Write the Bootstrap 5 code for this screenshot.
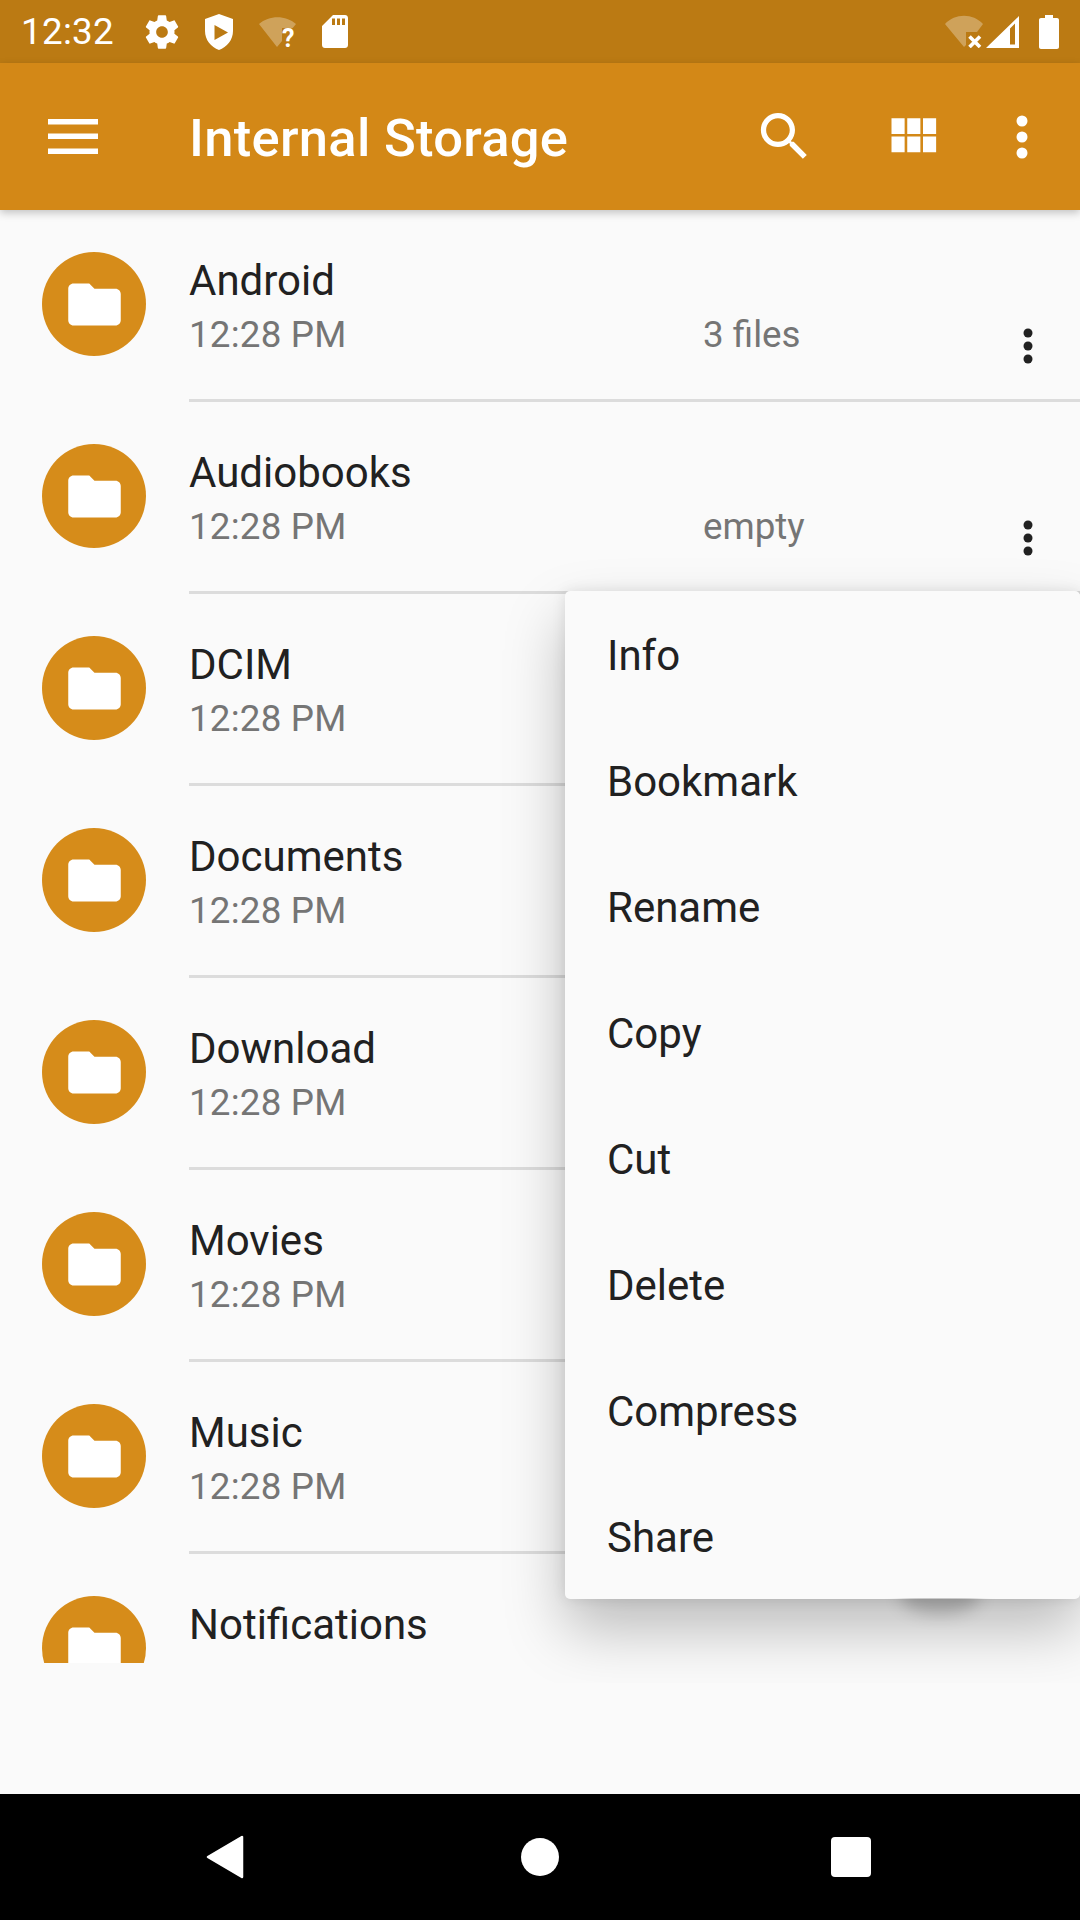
<!DOCTYPE html>
<html lang="en">
<head>
<meta charset="utf-8">
<title>Internal Storage</title>
<link rel="stylesheet" href="https://cdn.jsdelivr.net/npm/bootstrap@5.3.0/dist/css/bootstrap.min.css">
<style>
html, body { margin: 0; background: #fafafa; }
.phone { width: 1080px; height: 1920px; font-family: Roboto, "Liberation Sans", sans-serif; background: #fafafa; color: #212121; overflow: hidden; }
.statusbar { height: 63px; background: #bb7a13; color: #fff; font-size: 36.75px; line-height: 63px; flex: none; padding-right: 21px; }
.clock { margin-left: 21px; width: 96px; letter-spacing: .3px; }
.st-gear { margin-left: 24.5px; }
.st-shield { margin-left: 22.5px; }
.st-wifi { margin-left: 25px; }
.st-sd { margin-left: 25px; }
.st-signal { margin-left: 3px; }
.st-batt { margin-left: 20px; }
.q-mark { font-family: Roboto, "Liberation Sans", sans-serif; font-size: 25px; font-weight: 700; fill: #fff; }
.toolbar { height: 147px; background: #d38817; color: #fff; flex: none; position: relative; z-index: 2; box-shadow: 0 3px 8px rgba(0,0,0,.22); }
.tb-menu { margin-left: 48px; }
.tb-title { margin: 0 0 0 91px; font-size: 52.5px; font-weight: 500; line-height: 1; flex-grow: 1; padding-top: 4px; letter-spacing: .3px; }
.tb-search { margin-right: 65px; }
.tb-grid { margin-right: 72px; }
.tb-more { margin-right: 52px; }
.content { flex: 1 1 auto; position: relative; overflow: hidden; }
.files { height: 1453px; overflow: hidden; }
.file-row { height: 192px; background: transparent; border: 0; padding: 0; }
.folder-dot { width: 104px; height: 104px; margin: 42px 43px 0 42px; background: #d68c1a; border-radius: 50%; flex: none; }
.file-body { height: 192px; border-bottom: 3px solid #dcdcdc; padding-top: 46px; }
.file-row:last-child .file-body { border-bottom: 0; }
.file-name { font-size: 42px; line-height: 50px; color: #212121; }
.file-meta { font-size: 36.75px; line-height: 44px; color: #757575; margin-top: 7px; letter-spacing: .2px; }
.file-time { width: 514px; flex: none; }
.file-size { width: 316px; flex: none; letter-spacing: 0; }
.file-more { margin-top: 11px; flex: none; }
.popup { display: block; position: absolute; left: 565px; top: 381px; width: 515px; height: 1008px; padding: 0; margin: 0; border: 0; border-radius: 5px; background: #fafafa; z-index: 3; box-shadow: 0 30px 60px rgba(0,0,0,.25), 0 0 14px rgba(0,0,0,.1); clip-path: inset(-40px 0 -84px -70px); }
.popup-item { display: block; height: 126px; padding: 0 42px; font-size: 42px; line-height: 130px; color: #212121; }
.fab-shadow { position: absolute; left: 900px; top: 1368px; width: 80px; height: 36px; border-radius: 50%; background: rgba(0,0,0,.2); filter: blur(8px); z-index: 4; clip-path: inset(20px -30px -30px -30px); }
.navbar-sys { height: 126px; background: #000; flex: none; }
.nav-back { position: absolute; left: 205px; top: 40px; }
.nav-home { position: absolute; left: 521px; top: 44px; width: 38px; height: 38px; background: #fff; border-radius: 50%; }
.nav-recent { position: absolute; left: 831px; top: 43px; width: 40px; height: 40px; background: #fff; border-radius: 4px; }
svg { display: block; flex: none; }
</style>
</head>
<body>
<div class="phone d-flex flex-column">
  <div class="statusbar d-flex align-items-center">
    <span class="clock">12:32</span>
    <svg class="st-gear" width="40" height="40" viewBox="0 0 24 24" fill="#fff"><path d="M19.43 12.98c.04-.32.07-.64.07-.98s-.03-.66-.07-.98l2.11-1.65c.19-.15.24-.42.12-.64l-2-3.46c-.12-.22-.39-.3-.61-.22l-2.49 1c-.52-.4-1.08-.73-1.69-.98l-.38-2.65C14.46 2.18 14.25 2 14 2h-4c-.25 0-.46.18-.49.42l-.38 2.65c-.61.25-1.17.59-1.69.98l-2.49-1c-.23-.09-.49 0-.61.22l-2 3.46c-.13.22-.07.49.12.64l2.11 1.65c-.04.32-.07.65-.07.98s.03.66.07.98l-2.11 1.65c-.19.15-.24.42-.12.64l2 3.46c.12.22.39.3.61.22l2.49-1c.52.4 1.08.73 1.69.98l.38 2.65c.03.24.24.42.49.42h4c.25 0 .46-.18.49-.42l.38-2.65c.61-.25 1.17-.59 1.69-.98l2.49 1c.23.09.49 0 .61-.22l2-3.46c.12-.22.07-.49-.12-.64l-2.11-1.65zM12 15.5c-1.93 0-3.5-1.57-3.5-3.5s1.57-3.5 3.5-3.5 3.5 1.57 3.5 3.5-1.57 3.5-3.5 3.5z"/></svg>
    <svg class="st-shield" width="30" height="36" viewBox="0 0 30 36"><path fill="#fff" fill-rule="evenodd" d="M15 0 L29 5 V17 C29 26 23 33 15 36 C7 33 1 26 1 17 V5 Z M10.5 11 V26 L24 18.5 Z"/></svg>
    <svg class="st-wifi" width="38" height="44" viewBox="0 -6 38 44"><path fill="#fff" fill-opacity=".3" d="M0 8 C10 -1 27 -1 37 8 L33.7 12 H23 V25 L18 31 Z"/><text class="q-mark" x="23" y="31">?</text></svg>
    <svg class="st-sd" width="26" height="33" viewBox="0 0 26 33"><path fill="#fff" fill-rule="evenodd" d="M11 0 H23 C24.7 0 26 1.3 26 3 V30 C26 31.7 24.7 33 23 33 H3 C1.3 33 0 31.7 0 30 V11 Z M10 3.5 V10 H13 V3.5 Z M15 3.5 V10 H18 V3.5 Z M20 3.5 V10 H23 V3.5 Z"/></svg>
    <svg class="ms-auto" width="38" height="33" viewBox="0 0 38 33"><path fill="#fff" fill-opacity=".3" d="M0 9 C10 -2 28 -2 38 9 L32 17 H21 V30 L19 32 Z"/><path stroke="#fff" stroke-width="3.6" d="M24.5 21.5 L35 32 M35 21.5 L24.5 32"/></svg>
    <svg class="st-signal" width="33" height="32" viewBox="0 0 33 32"><path fill="#fff" fill-rule="evenodd" d="M33 0 V32 H0 Z M29 7.5 L24 12.5 V28.5 H29 Z"/></svg>
    <svg class="st-batt" width="20" height="34" viewBox="0 0 20 34"><path fill="#fff" d="M6 0 H14 V3 H18 C19.1 3 20 3.9 20 5 V32 C20 33.1 19.1 34 18 34 H2 C.9 34 0 33.1 0 32 V5 C0 3.9 .9 3 2 3 H6 Z"/></svg>
  </div>

  <header class="toolbar d-flex align-items-center">
    <svg class="tb-menu" width="50" height="35" viewBox="0 0 50 35" fill="#fff"><rect width="50" height="5.5" y="0"/><rect width="50" height="5.5" y="14.5"/><rect width="50" height="5.5" y="29.5"/></svg>
    <h1 class="tb-title">Internal Storage</h1>
    <svg class="tb-search" width="63" height="63" viewBox="0 0 24 24" fill="#fff"><path d="M15.5 14h-.79l-.28-.27C15.41 12.59 16 11.11 16 9.5 16 5.91 13.09 3 9.5 3S3 5.91 3 9.5 5.91 16 9.5 16c1.61 0 3.09-.59 4.23-1.57l.27.28v.79l5 4.99L20.49 19l-4.99-5zm-6 0C7.01 14 5 11.99 5 9.5S7.01 5 9.5 5 14 7.01 14 9.5 11.99 14 9.5 14z"/></svg>
    <svg class="tb-grid" width="63" height="63" viewBox="0 0 24 24" fill="#fff"><path d="M4 11h5V5H4v6zm0 7h5v-6H4v6zm6 0h5v-6h-5v6zm6 0h5v-6h-5v6zm-6-7h5V5h-5v6zm6-6v6h5V5h-5z"/></svg>
    <svg class="tb-more" width="12" height="44" viewBox="0 0 12 44" fill="#fff"><circle cx="6" cy="6" r="5.5"/><circle cx="6" cy="22" r="5.5"/><circle cx="6" cy="38" r="5.5"/></svg>
  </header>

  <main class="content">
    <div class="files list-group list-group-flush">
      <div class="file-row list-group-item d-flex">
        <div class="folder-dot d-flex align-items-center justify-content-center"><svg width="63" height="63" viewBox="0 0 24 24" fill="#fff"><path d="M10 4H4c-1.1 0-2 .9-2 2v12c0 1.1.9 2 2 2h16c1.1 0 2-.9 2-2V8c0-1.1-.9-2-2-2h-8l-2-2z"/></svg></div>
        <div class="file-body flex-grow-1">
          <div class="file-name">Android</div>
          <div class="file-meta d-flex"><span class="file-time">12:28 PM</span><span class="file-size">3 files</span><svg class="file-more" width="18" height="44" viewBox="0 0 18 44" fill="#212121"><circle cx="9" cy="9" r="4.5"/><circle cx="9" cy="22" r="4.5"/><circle cx="9" cy="35" r="4.5"/></svg></div>
        </div>
      </div>
      <div class="file-row list-group-item d-flex">
        <div class="folder-dot d-flex align-items-center justify-content-center"><svg width="63" height="63" viewBox="0 0 24 24" fill="#fff"><path d="M10 4H4c-1.1 0-2 .9-2 2v12c0 1.1.9 2 2 2h16c1.1 0 2-.9 2-2V8c0-1.1-.9-2-2-2h-8l-2-2z"/></svg></div>
        <div class="file-body flex-grow-1">
          <div class="file-name">Audiobooks</div>
          <div class="file-meta d-flex"><span class="file-time">12:28 PM</span><span class="file-size">empty</span><svg class="file-more" width="18" height="44" viewBox="0 0 18 44" fill="#212121"><circle cx="9" cy="9" r="4.5"/><circle cx="9" cy="22" r="4.5"/><circle cx="9" cy="35" r="4.5"/></svg></div>
        </div>
      </div>
      <div class="file-row list-group-item d-flex">
        <div class="folder-dot d-flex align-items-center justify-content-center"><svg width="63" height="63" viewBox="0 0 24 24" fill="#fff"><path d="M10 4H4c-1.1 0-2 .9-2 2v12c0 1.1.9 2 2 2h16c1.1 0 2-.9 2-2V8c0-1.1-.9-2-2-2h-8l-2-2z"/></svg></div>
        <div class="file-body flex-grow-1"><div class="file-name">DCIM</div><div class="file-meta">12:28 PM</div></div>
      </div>
      <div class="file-row list-group-item d-flex">
        <div class="folder-dot d-flex align-items-center justify-content-center"><svg width="63" height="63" viewBox="0 0 24 24" fill="#fff"><path d="M10 4H4c-1.1 0-2 .9-2 2v12c0 1.1.9 2 2 2h16c1.1 0 2-.9 2-2V8c0-1.1-.9-2-2-2h-8l-2-2z"/></svg></div>
        <div class="file-body flex-grow-1"><div class="file-name">Documents</div><div class="file-meta">12:28 PM</div></div>
      </div>
      <div class="file-row list-group-item d-flex">
        <div class="folder-dot d-flex align-items-center justify-content-center"><svg width="63" height="63" viewBox="0 0 24 24" fill="#fff"><path d="M10 4H4c-1.1 0-2 .9-2 2v12c0 1.1.9 2 2 2h16c1.1 0 2-.9 2-2V8c0-1.1-.9-2-2-2h-8l-2-2z"/></svg></div>
        <div class="file-body flex-grow-1"><div class="file-name">Download</div><div class="file-meta">12:28 PM</div></div>
      </div>
      <div class="file-row list-group-item d-flex">
        <div class="folder-dot d-flex align-items-center justify-content-center"><svg width="63" height="63" viewBox="0 0 24 24" fill="#fff"><path d="M10 4H4c-1.1 0-2 .9-2 2v12c0 1.1.9 2 2 2h16c1.1 0 2-.9 2-2V8c0-1.1-.9-2-2-2h-8l-2-2z"/></svg></div>
        <div class="file-body flex-grow-1"><div class="file-name">Movies</div><div class="file-meta">12:28 PM</div></div>
      </div>
      <div class="file-row list-group-item d-flex">
        <div class="folder-dot d-flex align-items-center justify-content-center"><svg width="63" height="63" viewBox="0 0 24 24" fill="#fff"><path d="M10 4H4c-1.1 0-2 .9-2 2v12c0 1.1.9 2 2 2h16c1.1 0 2-.9 2-2V8c0-1.1-.9-2-2-2h-8l-2-2z"/></svg></div>
        <div class="file-body flex-grow-1"><div class="file-name">Music</div><div class="file-meta">12:28 PM</div></div>
      </div>
      <div class="file-row list-group-item d-flex">
        <div class="folder-dot d-flex align-items-center justify-content-center"><svg width="63" height="63" viewBox="0 0 24 24" fill="#fff"><path d="M10 4H4c-1.1 0-2 .9-2 2v12c0 1.1.9 2 2 2h16c1.1 0 2-.9 2-2V8c0-1.1-.9-2-2-2h-8l-2-2z"/></svg></div>
        <div class="file-body flex-grow-1"><div class="file-name">Notifications</div></div>
      </div>
    </div>

    <div class="popup dropdown-menu show">
      <a class="popup-item text-decoration-none" href="#">Info</a>
      <a class="popup-item text-decoration-none" href="#">Bookmark</a>
      <a class="popup-item text-decoration-none" href="#">Rename</a>
      <a class="popup-item text-decoration-none" href="#">Copy</a>
      <a class="popup-item text-decoration-none" href="#">Cut</a>
      <a class="popup-item text-decoration-none" href="#">Delete</a>
      <a class="popup-item text-decoration-none" href="#">Compress</a>
      <a class="popup-item text-decoration-none" href="#">Share</a>
    </div>
    <div class="fab-shadow"></div>
  </main>

  <nav class="navbar-sys position-relative">
    <svg class="nav-back" width="40" height="46" viewBox="0 0 40 46"><path fill="#fff" d="M37 3 V43 L3 23 Z" stroke="#fff" stroke-width="2.5" stroke-linejoin="round"/></svg>
    <div class="nav-home"></div>
    <div class="nav-recent"></div>
  </nav>
</div>
<script src="https://cdn.jsdelivr.net/npm/bootstrap@5.3.0/dist/js/bootstrap.bundle.min.js"></script>
</body>
</html>
